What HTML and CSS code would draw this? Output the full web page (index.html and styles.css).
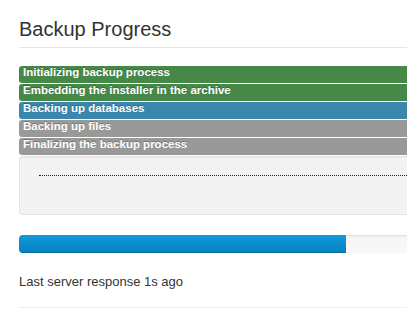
FILE: index.html
```html
<!DOCTYPE html>
<html lang="en">
<head>
  <meta charset="UTF-8" />
  <meta name="viewport" content="width=device-width, initial-scale=1.0"/>
  <title>Backup Progress</title>
  <link rel="stylesheet" href="styles.css">
</head>
<body>
  <div class="backup-box">
    <h2>Backup Progress</h2>

    <div class="steps">
      <div class="step done">Initializing backup process</div>
      <div class="step done">Embedding the installer in the archive</div>
      <div class="step active">Backing up databases</div>
      <div class="step">Backing up files</div>
      <div class="step">Finalizing the backup process</div>
    </div>

    <div class="log">
      <div class="log-line"></div>
    </div>

    <div class="progress">
      <div class="bar" style="width: 77.86%"></div>
    </div>

    <p class="status">Last server response 1s ago</p>
    <hr />
  </div>
</body>
</html>
```

FILE: styles.css
```css
body {
  margin: 0;
  padding: 0;
  background: #fff;
  font-family: "Liberation Sans", Arial, sans-serif;
  color: #333;
  overflow: hidden;
}

.backup-box {
  width: 420px;
  margin-left: 19px;
}

h2 {
  margin: 18px 0 18px;
  padding-bottom: 6px;
  border-bottom: 1px solid #e5e5e5;
  font-size: 20px;
  font-weight: normal;
  line-height: 23px;
}

.steps {
  display: flex;
  flex-direction: column;
  gap: 1px;
}

.step {
  padding: 0 4px 4px;
  line-height: 13px;
  font-size: 11.5px;
  font-weight: bold;
  color: #fff;
  text-shadow: 0 -1px 0 rgba(0, 0, 0, 0.25);
  background: #999;
  border-radius: 3px 0 0 3px;
  white-space: nowrap;
}

.step.done {
  background: #468847;
}

.step.active {
  background: #3a87ad;
}

.log {
  margin-top: 1px;
  padding: 18px 19px 0;
  height: 39px;
  background: #f3f3f3;
  border: 1px solid #e3e3e3;
  border-radius: 4px;
  box-shadow: inset 0 1px 1px rgba(0, 0, 0, 0.04);
}

.log-line {
  border-top: 1px dotted #222;
}

.progress {
  margin-top: 20px;
  height: 18px;
  background: linear-gradient(#f5f5f5, #f9f9f9);
  border-radius: 4px;
  box-shadow: inset 0 1px 2px rgba(0, 0, 0, 0.1);
  overflow: hidden;
}

.bar {
  height: 100%;
  background: linear-gradient(#149bdf, #0480be);
  box-shadow: inset 0 -1px 0 rgba(0, 0, 0, 0.15);
}

.status {
  margin: 20px 0 16px;
  font-size: 13px;
  line-height: 18px;
}

hr {
  margin: 0;
  border: 0;
  border-top: 1px solid #eee;
}
```
